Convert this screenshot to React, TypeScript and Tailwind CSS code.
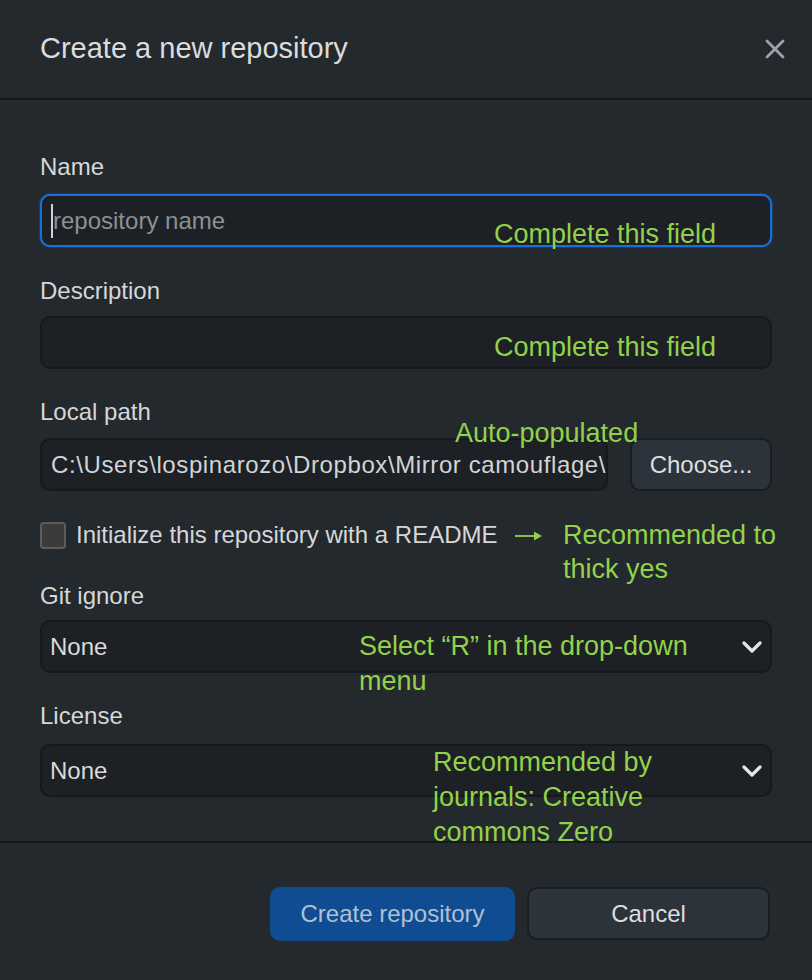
import React from "react";

const font = { fontFamily: '"Liberation Sans", Arial, sans-serif' };

function Chevron() {
  return (
    <svg width="20" height="12" viewBox="0 0 20 12" className="shrink-0">
      <path d="M2 2 L10 10 L18 2" fill="none" stroke="#e4e6e8" strokeWidth="3.2" strokeLinecap="round" strokeLinejoin="round" />
    </svg>
  );
}

function Label({ children, className = "" }: { children: React.ReactNode; className?: string }) {
  return <div className={`h-[30px] leading-[30px] text-[24px] text-[#d5d7d9] ${className}`}>{children}</div>;
}

function Select({ className = "" }: { className?: string }) {
  return (
    <div className={`h-[53px] rounded-[10px] border-2 border-[#16191c] bg-[#1d2025] flex items-center justify-between pl-[8px] pr-[8px] ${className}`}>
      <span className="text-[24px] text-[#d8dadc]">None</span>
      <Chevron />
    </div>
  );
}

export default function App() {
  return (
    <div className="relative w-[812px] h-[980px] bg-[#24292e] overflow-hidden" style={font}>
      {/* Header */}
      <div className="h-[100px] flex items-center justify-between pl-[40px] pr-[27px] border-b-2 border-[#15171a]">
        <h1 className="text-[29px] text-[#dadcde] font-normal">Create a new repository</h1>
        <svg width="20" height="20" viewBox="0 0 20 20">
          <path d="M2 2 L18 18 M18 2 L2 18" stroke="#9ca2a8" strokeWidth="2.8" strokeLinecap="round" />
        </svg>
      </div>

      {/* Body */}
      <div className="px-[40px] pt-[52px] pb-[44px] border-b-2 border-[#16181b] flex flex-col">
        <Label>Name</Label>
        <div className="mt-[12px] h-[53px] rounded-[10px] border-2 border-[#1b6fd8] bg-[#1d2025] flex items-center pl-[9px] shadow-[0_0_2px_#1b6fd8]">
          <span className="w-[2px] h-[34px] bg-[#d0d0d0]" />
          <span className="text-[24px] text-[#8c9095]">repository name</span>
        </div>

        <Label className="mt-[29px]">Description</Label>
        <div className="mt-[10px] h-[53px] rounded-[10px] border-2 border-[#16191c] bg-[#1d2025]" />

        <Label className="mt-[28px]">Local path</Label>
        <div className="mt-[11px] flex gap-[22px]">
          <div className="flex-1 h-[53px] rounded-[10px] border-2 border-[#16191c] bg-[#1d2025] flex items-center pl-[9px] overflow-hidden whitespace-nowrap">
            <span className="text-[24px] text-[#d2d4d6] tracking-[0.6px]">C:\Users\lospinarozo\Dropbox\Mirror camouflage\</span>
          </div>
          <div className="w-[142px] h-[53px] rounded-[10px] border-2 border-[#1a1d21] bg-[#2d333b] flex items-center justify-center text-[24px] text-[#dcdee0]">
            Choose...
          </div>
        </div>

        <div className="mt-[29px] h-[30px] flex items-center">
          <span className="w-[26px] h-[27px] rounded-[4px] border-2 border-[#5c5c5c] bg-[#3b3b3b] shrink-0" />
          <span className="ml-[10px] text-[24px] text-[#d5d7d9]">Initialize this repository with a README</span>
        </div>

        <Label className="mt-[31px]">Git ignore</Label>
        <Select className="mt-[9px]" />

        <Label className="mt-[28px]">License</Label>
        <Select className="mt-[13px]" />
      </div>

      {/* Footer */}
      <div className="flex justify-end gap-[12px] pt-[44px] pr-[42px]">
        <div className="w-[245px] h-[54px] rounded-[10px] bg-[#0f4c92] flex items-center justify-center text-[24px] text-[#b1c0d3]">
          Create repository
        </div>
        <div className="w-[243px] h-[53px] rounded-[10px] border-2 border-[#1a1d21] bg-[#2d333b] flex items-center justify-center text-[24px] text-[#dcdee0]">
          Cancel
        </div>
      </div>

      {/* Annotations */}
      <div className="absolute left-[494px] top-[217px] text-[27px] leading-[35px] text-[#92d24a]">Complete this field</div>
      <div className="absolute left-[494px] top-[330px] text-[27px] leading-[35px] text-[#92d24a]">Complete this field</div>
      <div className="absolute left-[455px] top-[416px] text-[27px] leading-[35px] text-[#92d24a]">Auto-populated</div>
      <svg className="absolute left-[514px] top-[530px]" width="30" height="12" viewBox="0 0 30 12">
        <path d="M1 6 H22" stroke="#92d24a" strokeWidth="1.8" />
        <path d="M20 1.5 L28 6 L20 10.5 Z" fill="#92d24a" />
      </svg>
      <div className="absolute left-[563px] top-[518px] text-[27px] leading-[34px] text-[#92d24a]">
        Recommended to
        <br />
        thick yes
      </div>
      <div className="absolute left-[359px] top-[629px] text-[27px] leading-[35px] text-[#92d24a]">
        Select “R” in the drop-down
        <br />
        menu
      </div>
      <div className="absolute left-[433px] top-[745px] text-[27px] leading-[35px] text-[#92d24a]">
        Recommended by
        <br />
        journals: Creative
        <br />
        commons Zero
      </div>
    </div>
  );
}
